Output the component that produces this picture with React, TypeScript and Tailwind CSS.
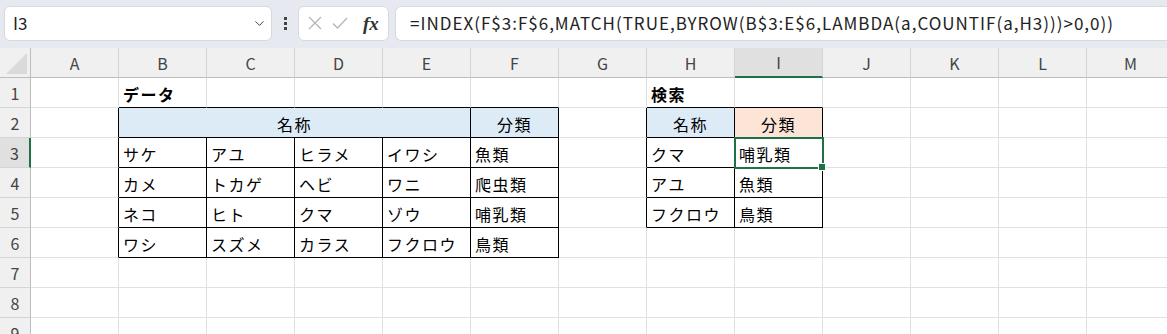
import { ChevronDown } from "lucide-react";

type Cell = {
  t: string;
  bold?: boolean;
  center?: boolean;
  bg?: string;
  span?: number;
};

const COLS = ["A", "B", "C", "D", "E", "F", "G", "H", "I", "J", "K", "L", "M"];
const ROWS = [1, 2, 3, 4, 5, 6, 7, 8, 9];

const blue = "bg-[#ddebf7]";
const peach = "bg-[#fce4d6]";

const cells: Record<string, Cell> = {
  B1: { t: "データ", bold: true },
  H1: { t: "検索", bold: true },
  B2: { t: "名称", center: true, bg: blue, span: 4 },
  F2: { t: "分類", center: true, bg: blue },
  H2: { t: "名称", center: true, bg: blue },
  I2: { t: "分類", center: true, bg: peach },
  B3: { t: "サケ" },
  C3: { t: "アユ" },
  D3: { t: "ヒラメ" },
  E3: { t: "イワシ" },
  F3: { t: "魚類" },
  B4: { t: "カメ" },
  C4: { t: "トカゲ" },
  D4: { t: "ヘビ" },
  E4: { t: "ワニ" },
  F4: { t: "爬虫類" },
  B5: { t: "ネコ" },
  C5: { t: "ヒト" },
  D5: { t: "クマ" },
  E5: { t: "ゾウ" },
  F5: { t: "哺乳類" },
  B6: { t: "ワシ" },
  C6: { t: "スズメ" },
  D6: { t: "カラス" },
  E6: { t: "フクロウ" },
  F6: { t: "鳥類" },
  H3: { t: "クマ" },
  I3: { t: "哺乳類" },
  H4: { t: "アユ" },
  I4: { t: "魚類" },
  H5: { t: "フクロウ" },
  I5: { t: "鳥類" },
};

// merged cells covered by B2
const covered = new Set(["C2", "D2", "E2"]);

const inTable = (c: number, r: number) =>
  (c >= 1 && c <= 5 && r >= 2 && r <= 6) || (c >= 7 && c <= 8 && r >= 2 && r <= 5);

const font = { fontFamily: '"Noto Sans CJK JP", "Noto Sans", sans-serif' };

function FormulaBar() {
  return (
    <div className="h-[48px] bg-[#e6e9ef] flex items-center gap-[6px] pl-[4px] pb-[2px]">
      <div className="w-[268px] h-[35px] bg-white rounded-[6px] border border-[#d6d9de] flex items-center justify-between pl-[8px] pr-[4px]">
        <span className="text-[17px] text-[#222]">I3</span>
        <ChevronDown className="w-[15px] h-[15px] text-[#444]" strokeWidth={1.6} />
      </div>
      <div className="w-[14px] flex flex-col items-center gap-[2px]">
        <div className="w-[3px] h-[3px] bg-[#444]" />
        <div className="w-[3px] h-[3px] bg-[#444]" />
        <div className="w-[3px] h-[3px] bg-[#444]" />
      </div>
      <div className="w-[91px] h-[35px] bg-white rounded-[6px] border border-[#d6d9de] flex items-center pl-[8px] gap-[9px]">
        <svg width="16" height="16" viewBox="0 0 16 16" stroke="#b5b5b5" strokeWidth="1.3" fill="none">
          <path d="M2 2 L14 14 M14 2 L2 14" />
        </svg>
        <svg width="16" height="16" viewBox="0 0 16 16" stroke="#b5b5b5" strokeWidth="1.3" fill="none">
          <path d="M1 8.5 L5.5 13 L15 3" />
        </svg>
        <span
          className="ml-[6px] text-[19px] italic font-bold text-[#333] leading-none"
          style={{ fontFamily: '"Liberation Serif", "DejaVu Serif", serif' }}
        >
          fx
        </span>
      </div>
      <div className="flex-1 h-[35px] bg-white rounded-l-[6px] border border-r-0 border-[#d6d9de] flex items-center pl-[14px]">
        <span className="text-[17px] text-[#222] whitespace-nowrap tracking-[1px]">
          =INDEX(F$3:F$6,MATCH(TRUE,BYROW(B$3:E$6,LAMBDA(a,COUNTIF(a,H3)))&gt;0,0))
        </span>
      </div>
    </div>
  );
}

function Sheet() {
  const out: React.ReactNode[] = [];

  // header row
  out.push(
    <div key="corner" className="h-[30px] bg-[#f0f0f0] border-r border-b border-[#bdbdbd] relative">
      <svg className="absolute right-[3px] bottom-[3px]" width="21" height="21" viewBox="0 0 21 21">
        <polygon points="21,0 21,21 0,21" fill="#dadada" />
      </svg>
    </div>
  );
  COLS.forEach((col) => {
    const sel = col === "I";
    out.push(
      <div
        key={"h" + col}
        className={
          "h-[30px] flex items-center justify-center text-[16px] text-[#444] border-r border-[#d4d4d4] " +
          (sel ? "bg-[#e0e0e0] border-b-[2px] border-b-[#1e7145]" : "bg-[#f0f0f0] border-b border-b-[#bdbdbd]")
        }
      >
        {col}
      </div>
    );
  });

  ROWS.forEach((r) => {
    const selRow = r === 3;
    out.push(
      <div
        key={"r" + r}
        className={
          "h-[30px] flex items-center justify-center text-[16px] text-[#444] border-b border-[#d4d4d4] " +
          (selRow ? "bg-[#e0e0e0] border-r-[2px] border-r-[#1e7145]" : "bg-[#f0f0f0] border-r border-r-[#bdbdbd]")
        }
      >
        {r}
      </div>
    );
    COLS.forEach((col, c) => {
      const key = col + r;
      if (covered.has(key)) return;
      const cell = cells[key];
      const span = cell?.span ?? 1;
      const lastC = c + span - 1;
      const rightBlack = inTable(lastC, r) || inTable(lastC + 1, r);
      const bottomBlack = inTable(c, r) || inTable(c, r + 1);
      const cls = [
        "h-[30px] relative flex items-center pt-[2px] text-[16px] tracking-[1.5px] text-black whitespace-nowrap border-r border-b",
        rightBlack ? "border-r-black" : "border-r-[#e1e1e1]",
        bottomBlack ? "border-b-black" : "border-b-[#e1e1e1]",
        cell?.bg ?? "bg-white",
        cell?.center ? "justify-center" : "pl-[4px]",
        cell?.bold ? "font-bold tracking-[0.5px]" : "",
        span === 4 ? "col-span-4" : "",
      ].join(" ");
      out.push(
        <div key={key} className={cls}>
          {cell?.t}
          {key === "I3" && (
            <>
              <div className="absolute z-10 left-[-1px] top-[-1px] w-[90px] h-[32px] border-2 border-[#1e7145]" />
              <div className="absolute z-20 right-[-4px] bottom-[-4px] w-[6px] h-[6px] bg-[#1e7145] border border-white box-content" />
            </>
          )}
        </div>
      );
    });
  });

  return <div className="grid grid-cols-[31px_repeat(13,88px)] auto-rows-[30px]">{out}</div>;
}

export default function App() {
  return (
    <div className="w-[1167px] h-[334px] overflow-hidden bg-white" style={font}>
      <FormulaBar />
      <Sheet />
    </div>
  );
}
